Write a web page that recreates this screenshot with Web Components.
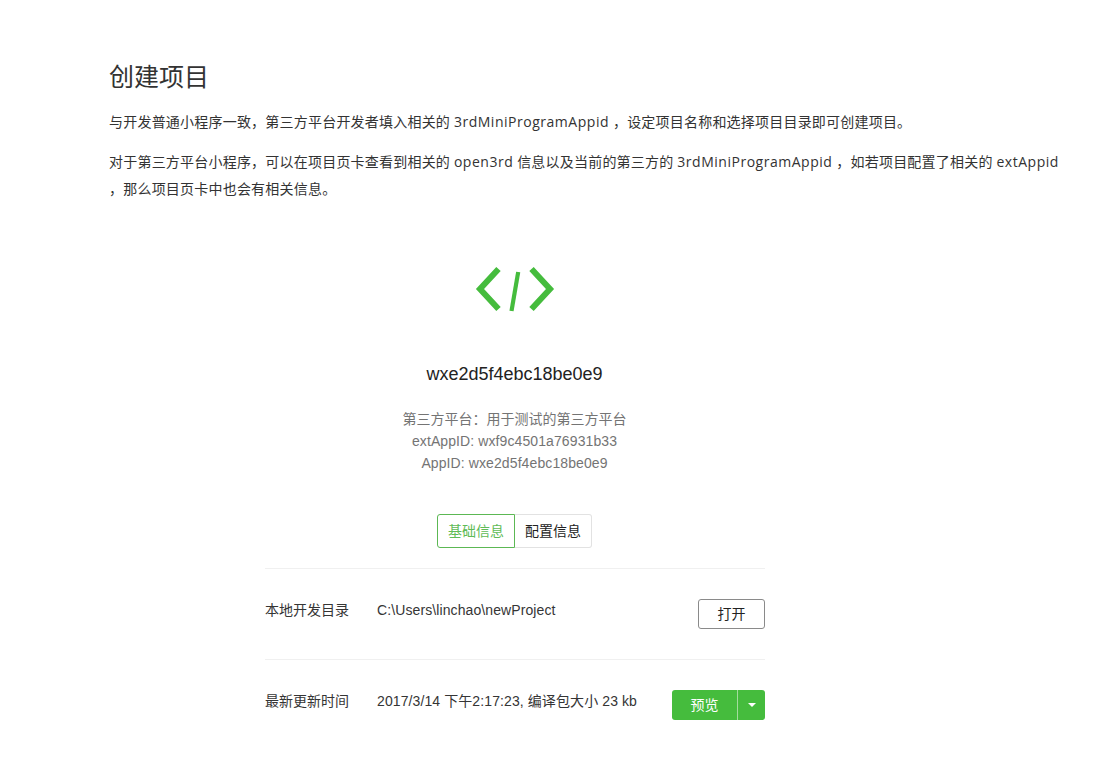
<!DOCTYPE html>
<html lang="zh"><head><meta charset="utf-8">
<style>
html,body{margin:0;padding:0;background:#fff;overflow:hidden}
body{font-family:"Liberation Sans","Noto Sans CJK SC",sans-serif;height:766px}
.pn{font-family:"Noto Sans CJK TC",sans-serif}
.la{letter-spacing:.52px}
</style></head><body>
<doc-page>
  <doc-text slot="intro">
    <h1>创建项目</h1>
    <p>与开发普通小程序一致<span class="pn">，</span>第三方平台开发者填入相关的 <span class="la">3rdMiniProgramAppid</span> <span class="pn">，</span>设定项目名称和选择项目目录即可创建项目。</p>
    <p>对于第三方平台小程序<span class="pn">，</span>可以在项目页卡查看到相关的 <span class="la">open3rd</span> 信息以及当前的第三方的 <span class="la">3rdMiniProgramAppid</span> <span class="pn">，</span>如若项目配置了相关的 <span class="la">extAppid</span><br><span class="pn">，</span>那么项目页卡中也会有相关信息。</p>
  </doc-text>
  <project-panel slot="panel"></project-panel>
</doc-page>
<script>
function def(name,html){
  customElements.define(name,class extends HTMLElement{
    constructor(){super();this.attachShadow({mode:'open'}).innerHTML=html;}
  });
}
def('doc-page',`<style>
:host{display:block;box-sizing:border-box;width:1108px;height:766px;overflow:hidden;padding:0 0 0 109px}
.panel{display:flex;padding-left:155px}
</style><slot name="intro"></slot><div class="panel"><slot name="panel"></slot></div>`);
def('doc-text',`<style>
:host{display:block;font-family:"Open Sans","Noto Sans CJK SC",sans-serif;color:#333;font-size:14px;line-height:27px;letter-spacing:.21px}
::slotted(h1){margin:0 0 14px;padding-top:58px;font-weight:400;font-size:25px;letter-spacing:0;line-height:36px;color:#333;font-family:"Open Sans","Noto Sans CJK SC",sans-serif}
::slotted(p){margin:0 0 13px}
</style><slot></slot>`);
def('code-logo',`<style>:host{display:block;width:80px;height:46px}svg{display:block}</style>
<svg width="80" height="46" viewBox="0 0 80 46" fill="none" stroke="#45bc3d" stroke-width="6">
<path d="M23.500 3 5 23 23.500 43"/><path d="M56.500 3 75 23 56.500 43"/><path d="M43.200 6 36.500 45" stroke-width="4.200"/></svg>`);
def('row-item',`<style>
:host{display:flex;box-sizing:border-box;width:500px;height:91px;border-top:1px solid #f0f0f0;padding-top:30px;font-size:14px;line-height:20px;align-items:flex-start}
.l{width:112px;flex:none;color:#353535;padding-top:1px}
.v{flex:1;color:#353535;padding-top:1px;letter-spacing:.1px}
</style><div class="l"><slot name="label"></slot></div><div class="v"><slot name="value"></slot></div><slot name="action"></slot>`);
def('open-button',`<style>
:host{display:block;box-sizing:border-box;width:67px;height:30px;border:1px solid #8a8a8a;border-radius:3px;text-align:center;font-size:14px;line-height:28px;color:#222}
</style><slot></slot>`);
def('split-button',`<style>
:host{display:flex;width:93px;height:30px;border-radius:3px;overflow:hidden;background:#45bc3d;color:#fff;font-size:14px;line-height:30px}
.m{width:65px;text-align:center;border-right:1px solid #a3dc9e}
.c{flex:1;display:flex;align-items:center;justify-content:center}
.c i{width:0;height:0;border:4px solid transparent;border-top-color:#fff;border-bottom:0}
</style><div class="m"><slot></slot></div><div class="c"><i></i></div>`);
def('tab-group',`<style>
:host{display:flex;height:34px;font-size:14px;line-height:32px;text-align:center}
.a,.b{box-sizing:border-box;height:34px}
.a{width:78px;border:1px solid #5cb854;border-radius:3px 0 0 3px;color:#5fbb57}
.b{width:77px;border:1px solid #e2e2e2;border-left:0;border-radius:0 3px 3px 0;color:#222}
</style><div class="a">基础信息</div><div class="b">配置信息</div>`);
def('project-panel',`<style>
:host{display:flex;flex-direction:column;align-items:center;width:501px;margin-top:51px;font-family:"Liberation Sans","Noto Sans CJK SC",sans-serif}
.name{margin-top:49px;font-size:18px;line-height:26px;color:#222}
.meta{margin-top:20px;font-size:14px;line-height:22px;color:#747474;text-align:center}
.ml{letter-spacing:.1px}
.pn{font-family:"Noto Sans CJK TC",sans-serif}
tab-group{margin-top:40px}
.rows{margin-top:20px;align-self:flex-end}
</style>
<code-logo></code-logo>
<div class="name">wxe2d5f4ebc18be0e9</div>
<div class="meta">第三方平台<span class="pn">：</span>用于测试的第三方平台<br><span class="ml">extAppID: wxf9c4501a76931b33</span><br><span class="ml">AppID: wxe2d5f4ebc18be0e9</span></div>
<tab-group></tab-group>
<div class="rows">
<row-item><span slot="label">本地开发目录</span><span slot="value">C:\\Users\\linchao\\newProject</span><open-button slot="action">打开</open-button></row-item>
<row-item><span slot="label">最新更新时间</span><span slot="value">2017/3/14 下午2:17:23, 编译包大小 23 kb</span><split-button slot="action">预览</split-button></row-item>
</div>`);
</script>
</body></html>
